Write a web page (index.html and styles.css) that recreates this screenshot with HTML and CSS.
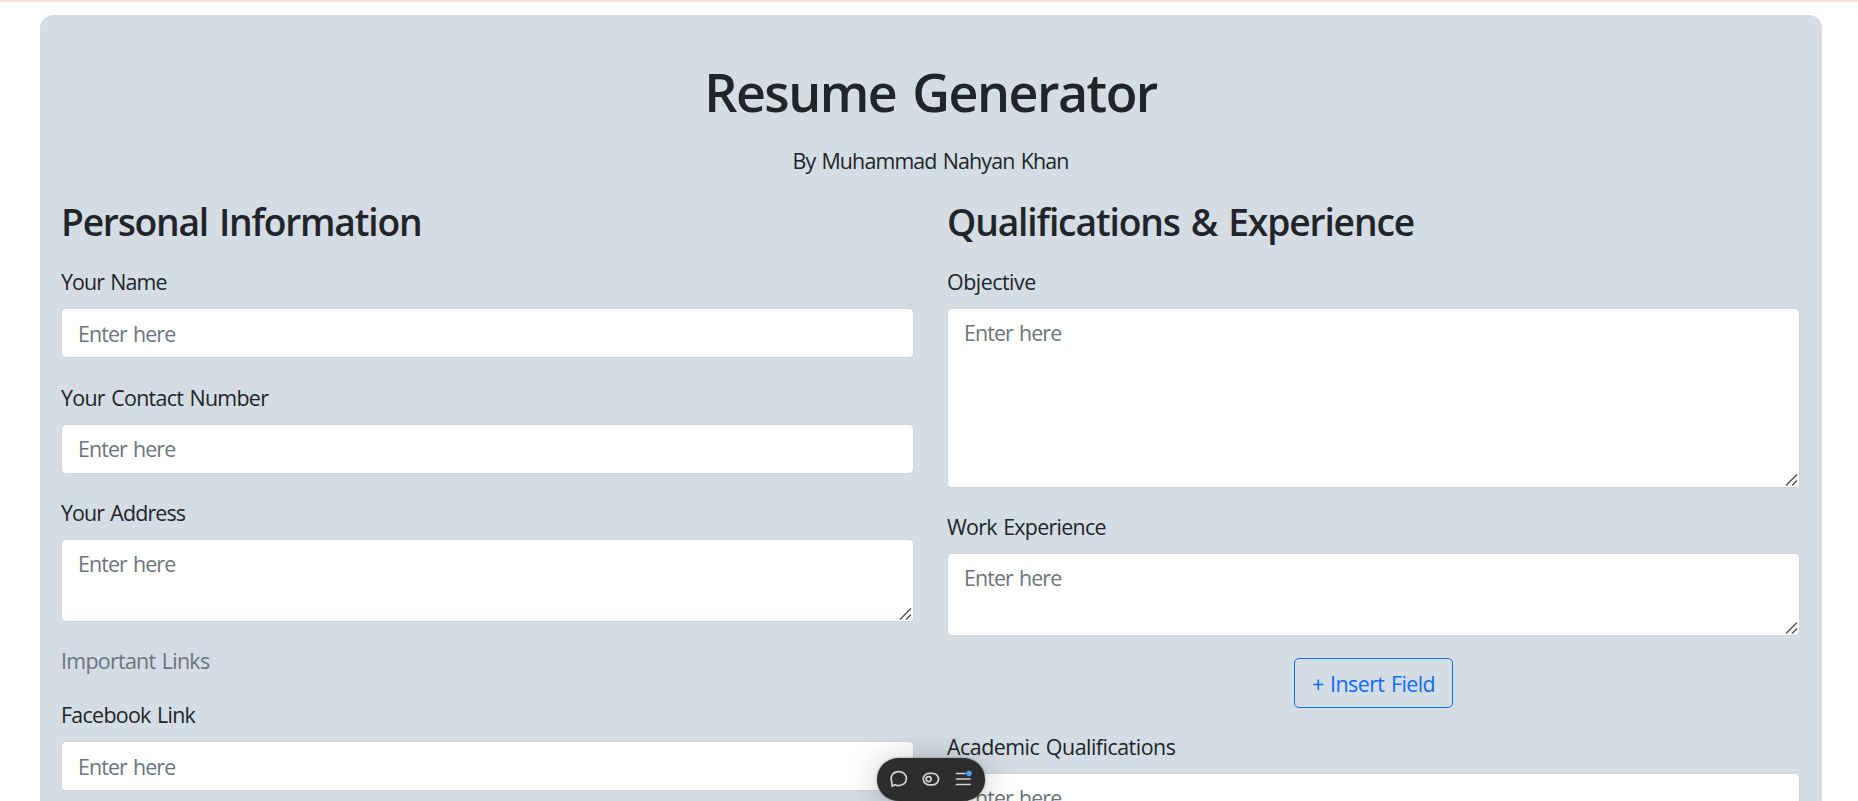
FILE: index.html
```
<!DOCTYPE html>
<html lang="en">
<head>
<meta charset="utf-8">
<title>Resume Generator</title>
<link rel="stylesheet" href="styles.css">
</head>
<body>
<div class="page">
  <main class="card">
    <h1 class="title">Resume Generator</h1>
    <p class="byline">By Muhammad Nahyan Khan</p>
    <div class="columns">
      <section class="column">
        <h2 class="heading heading-personal">Personal Information</h2>
        <div class="field">
          <label class="label label-short" for="name">Your Name</label>
          <input class="control" id="name" placeholder="Enter here">
        </div>
        <div class="field">
          <label class="label" for="contact">Your Contact Number</label>
          <input class="control" id="contact" placeholder="Enter here">
        </div>
        <div class="field">
          <label class="label label-short" for="address">Your Address</label>
          <div class="area-wrap">
            <textarea class="control area" id="address" placeholder="Enter here"></textarea>
            <svg class="grip" width="14" height="14" viewBox="0 0 14 14"><path d="M1 12.5 12 1.5M7 12.5 12 7.5"/></svg>
          </div>
        </div>
        <p class="links">Important Links</p>
        <div class="field">
          <label class="label" for="fb">Facebook Link</label>
          <input class="control" id="fb" placeholder="Enter here">
        </div>
      </section>
      <section class="column">
        <h2 class="heading heading-qualifications">Qualifications &amp; Experience</h2>
        <div class="field">
          <label class="label label-wide" for="objective">Objective</label>
          <div class="area-wrap">
            <textarea class="control area area-tall" id="objective" placeholder="Enter here"></textarea>
            <svg class="grip" width="14" height="14" viewBox="0 0 14 14"><path d="M1 12.5 12 1.5M7 12.5 12 7.5"/></svg>
          </div>
        </div>
        <div class="field">
          <label class="label" for="work">Work Experience</label>
          <div class="area-wrap">
            <textarea class="control area" id="work" placeholder="Enter here"></textarea>
            <svg class="grip" width="14" height="14" viewBox="0 0 14 14"><path d="M1 12.5 12 1.5M7 12.5 12 7.5"/></svg>
          </div>
        </div>
        <div class="actions"><button class="insert" type="button">+ Insert Field</button></div>
        <div class="field">
          <label class="label label-wide" for="academic">Academic Qualifications</label>
          <div class="area-wrap">
            <textarea class="control area" id="academic" placeholder="Enter here"></textarea>
          </div>
        </div>
      </section>
    </div>
  </main>
  <div class="toolbar">
    <svg width="108" height="43" viewBox="0 0 108 43">
      <path class="icon" d="M15.2 28.4 14.6 23.4C12.8 18.2 16.2 13.6 21.6 13.6C26.2 13.6 29.4 16.6 29.4 20.6C29.4 24.8 26 27.6 21.8 27.6C20.2 27.6 18.8 27.2 17.8 26.8Z"/>
      <rect class="icon" x="46.3" y="15.4" width="15.2" height="11.4" rx="5.7"/>
      <circle class="icon" cx="51.6" cy="21.1" r="2.5"/>
      <path class="icon" d="M79.5 15.5H88M79.5 21H93M79.5 26.5H93"/>
      <circle class="dot" cx="92" cy="15.5" r="2.8"/>
    </svg>
  </div>
</div>
</body>
</html>
```
FILE: styles.css
```
* { box-sizing: border-box; }
body {
  margin: 0;
  background: #fff;
  color: #212529;
  font-family: "Open Sans", "Noto Sans", sans-serif;
  font-size: 21.4px;
  word-spacing: 1.5px;
}
.page {
  position: relative;
  height: 801px;
  overflow: hidden;
  border-top: 2px solid #f5dfd6;
  padding: 13px 36px 0 40px;
}
.card {
  height: 900px;
  padding: 39px 22px 0 21px;
  border-radius: 13px;
  background: #d4dce4;
}
.title {
  margin: 0;
  font-size: 52px;
  font-weight: 600;
  line-height: 76px;
  letter-spacing: -1.5px;
  word-spacing: 4px;
  text-align: center;
}
.byline {
  margin: 14px 0 0;
  line-height: 33px;
  letter-spacing: -.85px;
  text-align: center;
}
.columns {
  display: grid;
  grid-template-columns: 1fr 1fr;
  gap: 33px;
  padding-top: 20px;
}
.column { min-width: 0; }
.heading {
  margin: 0 0 18px;
  font-size: 37.2px;
  font-weight: 600;
  line-height: 50px;
  word-spacing: 2.5px;
}
.heading-personal { letter-spacing: -1.21px; }
.heading-qualifications { letter-spacing: -1.13px; }
.field { margin-bottom: 22.4px; }
.label {
  display: block;
  margin-bottom: 10.1px;
  line-height: 33px;
  letter-spacing: -.7px;
}
.label-short { letter-spacing: -.88px; }
.label-wide { letter-spacing: -.49px; }
.control {
  display: block;
  width: 100%;
  height: 50.1px;
  padding: 7px 16px;
  border: 1px solid #ced4da;
  border-radius: 5px;
  background: #fff;
  color: #212529;
  font: inherit;
  line-height: 34px;
  letter-spacing: -.9px;
  word-spacing: 1.5px;
  resize: none;
}
.control::placeholder { color: #6c757d; opacity: 1; }
.area-wrap { position: relative; }
.area { height: 82.3px; overflow: hidden; }
.area-tall { height: 179.8px; }
.grip {
  position: absolute;
  right: 1px;
  bottom: 1px;
  fill: none;
  stroke: #555;
  stroke-width: 1.5;
}
.links {
  margin: 0 0 21.2px;
  color: #6c757d;
  line-height: 33px;
  letter-spacing: -.7px;
}
.actions {
  display: flex;
  justify-content: center;
  margin-bottom: 22px;
}
.insert {
  width: 159px;
  height: 50px;
  padding: 0;
  border: 1px solid #0d6efd;
  border-radius: 5px;
  background: transparent;
  color: #0d6efd;
  font: inherit;
  letter-spacing: -.55px;
  word-spacing: 1.5px;
  white-space: nowrap;
}
.toolbar {
  position: absolute;
  left: 877px;
  bottom: 0;
  width: 108px;
  height: 43px;
  border-radius: 22px;
  background: #2d2d2d;
  box-shadow: 0 0 2px rgba(0, 0, 0, .5), 0 3px 32px rgba(0, 0, 0, .25);
}
.toolbar svg { display: block; }
.icon { fill: none; stroke: #d0d0d0; stroke-width: 1.7; stroke-linecap: round; stroke-linejoin: round; }
.dot { fill: #4aa0ff; }
```
